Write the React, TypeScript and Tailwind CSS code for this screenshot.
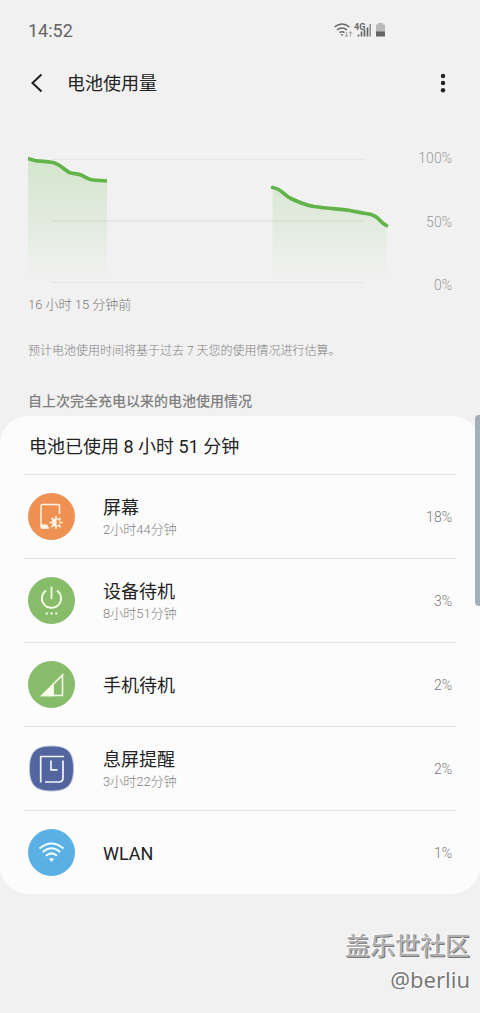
import type { ReactNode } from "react";

type Usage = {
    name: string;
    duration?: string;
    percent: number;
    icon: ReactNode;
};

const ScreenIcon = () => (
    <svg viewBox="0 0 48 48" className="mb-0.5 size-12" fill="none" stroke="#fff6e6" aria-hidden="true">
        <circle cx="24.5" cy="24.5" r="23.5" fill="#ee9152" stroke="none" />
        <path d="M32.5 22V14a1.500 1.500 0 0 0-1.500-1.500H15.500A1.500 1.500 0 0 0 14 14v20.500a1.500 1.500 0 0 0 1.500 1.500H21" strokeWidth="1.5" />
        <path d="M13.500 32.500H20l2.500 4h-7.500q-1.500 0-1.500-1.500z" fill="#fff6e6" stroke="none" />
        <path d="M29 24v13M22.500 30.500h13M24.400 25.900l9.200 9.200M33.600 25.900l-9.200 9.200" strokeWidth="1.6" />
        <circle cx="29" cy="30.500" r="4.200" fill="#fff6e6" stroke="none" />
        <path d="M29.500 27.500a3 3 0 0 1 0 6z" fill="#ee9152" stroke="none" />
    </svg>
);

const PowerIcon = () => (
    <svg viewBox="0 0 48 48" className="mb-0.5 size-12" fill="none" stroke="#f8ffe9" aria-hidden="true">
        <circle cx="24.5" cy="24.5" r="23.5" fill="#87bc6a" stroke="none" />
        <path d="M24.500 10.500v12.500" strokeWidth="1.8" />
        <path d="M19 14.500a9.600 9.600 0 1 0 11 0" strokeWidth="1.8" />
        <path d="M18.700 37.500h2M23.500 37.500h2M28.300 37.500h2" strokeWidth="1.8" />
    </svg>
);

const SignalIcon = () => (
    <svg viewBox="0 0 48 48" className="mb-0.5 size-12" fill="none" stroke="#f8ffe9" aria-hidden="true">
        <circle cx="24.5" cy="24.5" r="23.5" fill="#87bc6a" stroke="none" />
        <path d="M15 35.500L35.500 15v20.500z" strokeWidth="1.6" />
        <path d="M14 36.200L27 23.500v12.700z" fill="#f8ffe9" stroke="none" />
    </svg>
);

const ClockIcon = () => (
    <svg viewBox="0 0 48 48" className="mb-0.5 size-12" fill="none" stroke="#f4f5ff" strokeWidth="1.7" aria-hidden="true">
        <path
            d="M24.500 2C40.500 2 46.500 8 46.500 24.500S40.500 47 24.500 47 2.500 41 2.500 24.500 8.500 2 24.500 2z"
            fill="#52659f"
            stroke="#bcc4de"
            strokeWidth="1"
        />
        <path d="M13.700 38.500V12.500H37" />
        <path d="M36 16.500V34.500a3.500 3.500 0 0 1-3.500 3.500H18" />
        <path d="M24 16.500v9.300h6.500" />
    </svg>
);

const WlanIcon = () => (
    <svg viewBox="0 0 48 48" className="mb-0.5 size-12" fill="none" stroke="#f3ffff" strokeWidth="2" aria-hidden="true">
        <circle cx="24.5" cy="24.5" r="23.5" fill="#5aafe5" stroke="none" />
        <path d="M12.500 20.500q12-10 24 0" />
        <path d="M15.800 24q8.700-7.400 17.400 0" />
        <path d="M19 27.800q5.500-4.800 11 0" />
        <path d="M22 31q2.500-2 5 0L24.500 34z" fill="#f3ffff" stroke="none" />
    </svg>
);

const usages: Usage[] = [
    { name: "屏幕", duration: "2小时44分钟", percent: 18, icon: <ScreenIcon /> },
    { name: "设备待机", duration: "8小时51分钟", percent: 3, icon: <PowerIcon /> },
    { name: "手机待机", percent: 2, icon: <SignalIcon /> },
    { name: "息屏提醒", duration: "3小时22分钟", percent: 2, icon: <ClockIcon /> },
    { name: "WLAN", percent: 1, icon: <WlanIcon /> },
];

const StatusBar = () => (
    <div className="flex h-14 items-center justify-between pt-1.5 pr-[92px] pl-7">
        <span className="text-lg leading-6 text-[#656565]">14:52</span>
        <svg viewBox="0 0 56 18" className="h-[18px] w-14" fill="none" stroke="#666" aria-hidden="true">
            {/* wifi */}
            <path d="M2.500 5q7.500-6 15 0M5 8q5-4 10 0M7.500 10.700q2.500-2 5 0" strokeWidth="1.5" />
            <path d="M8.500 12.200h3L10 14z" fill="#666" stroke="none" />
            <path d="M14.500 10v5M12.800 13l1.700 2 1.700-2M18.500 14.500v-5M16.800 11.500l1.700-2 1.700 2" stroke="#aaa" />
            {/* 4G signal */}
            <text x="22" y="7.500" fontSize="9" fontWeight="700" fill="#666" stroke="none">
                4G
            </text>
            <path d="M26.500 14.500v-2M29.500 14.500v-5M32.500 14.500V8M35.500 14.500V5.500" strokeWidth="1.700" />
            <path d="M38.200 14.500V2" strokeWidth="1.500" stroke="#888" />
            {/* battery */}
            <path d="M44 2.500h2V1h5v1.500h2V10h-9z" fill="#b9b9b9" stroke="none" />
            <path d="M44 9.500h9v5h-9z" fill="#666" stroke="none" />
        </svg>
    </div>
);

const Header = () => (
    <header className="flex h-[54px] items-center justify-between px-6">
        <div className="flex items-center">
            <button type="button" aria-label="返回" className="mr-[19px] flex size-6 items-center justify-center">
                <svg viewBox="0 0 24 24" className="size-6" fill="none" stroke="#222" strokeWidth="2">
                    <path d="M17.500 3.500L8.500 12l9 8.500" />
                </svg>
            </button>
            <h1 className="pt-0.5 text-lg leading-6 text-[#222]">电池使用量</h1>
        </div>
        <button type="button" aria-label="更多选项" className="flex h-6 w-[26px] items-center justify-center">
            <svg viewBox="0 0 6 20" className="h-5 w-[6px]" fill="#222">
                <circle cx="3" cy="3" r="2.200" />
                <circle cx="3" cy="10" r="2.200" />
                <circle cx="3" cy="17.300" r="2.200" />
            </svg>
        </button>
    </header>
);

const firstCurve = "M0 10.500C4 11.500 6 13 12 13.200S22 14 25 14.500C32 16 36 22 42 24.800C46 26 48 25.200 53 27C58 29 60 31.500 65 32C70 32.500 74 32.500 79 33";
const secondCurve = "M244.500 39.500C253 40.500 255 46 262 50C268 53 280 57.500 286 58.500C300 60.500 310 61 322 62.500C330 64 332 64.500 338 65.500C352 67 351 74.500 358.500 77.500";

const BatteryChart = () => (
    <div className="flex h-[146px]">
        <svg viewBox="0 0 364 146" className="h-full min-w-0 flex-1" fill="none" role="img" aria-label="电池使用量">
            <defs>
                <linearGradient id="fade" gradientUnits="userSpaceOnUse" x1="0" y1="10" x2="0" y2="132">
                    <stop offset="0" stopColor="#6fc052" stopOpacity="0.23" />
                    <stop offset="0.500" stopColor="#6fc052" stopOpacity="0.120" />
                    <stop offset="1" stopColor="#6fc052" stopOpacity="0" />
                </linearGradient>
            </defs>
            <path d="M23 11.500H336M23 134.500H336" stroke="#e5e5e5" />
            <path d="M23 73H336" stroke="#e5e5e5" strokeWidth="2" />
            <path d={firstCurve + "V132H0z"} fill="url(#fade)" />
            <path d={secondCurve + "V132H244.500z"} fill="url(#fade)" />
            <path d={firstCurve} stroke="#63b34b" strokeWidth="3.700" />
            <path d={secondCurve} stroke="#63b34b" strokeWidth="3.700" strokeLinecap="round" />
        </svg>
        <div className="-mb-px flex w-[60px] flex-col justify-between text-right text-sm leading-5 font-light text-[#999]">
            <span>100%</span>
            <span>50%</span>
            <span>0%</span>
        </div>
    </div>
);

const UsageRow = ({ name, duration, percent, icon }: Usage) => (
    <li className="flex h-[84px] items-center border-t border-[#e4e4e4] pr-[5px] pl-1">
        {icon}
        <div className="ml-7 flex-1 pt-0.5">
            <p className="text-lg leading-6 text-[#222]">{name}</p>
            {duration && <p className="text-[13px] leading-5 font-light text-[#808080]">{duration}</p>}
        </div>
        <span className="text-sm leading-5 font-light text-[#777]">{percent}%</span>
    </li>
);

const App = () => {
    return (
        <div className="relative min-h-screen w-full overflow-hidden bg-[#f1f1f1] font-[Roboto,'Noto_Sans_CJK_SC',sans-serif]">
            <StatusBar />
            <Header />

            <main>
                <section className="px-7 pt-[38px]">
                    <BatteryChart />
                    <p className="pt-px text-[13px] leading-5 font-light text-[#777]">16 小时 15 分钟前</p>
                    <p className="mt-[26px] text-xs leading-5 font-light text-[#808080]">
                        预计电池使用时间将基于过去 7 天您的使用情况进行估算。
                    </p>
                    <h2 className="mt-[30px] text-sm leading-5 font-medium text-[#808080]">
                        自上次完全充电以来的电池使用情况
                    </h2>
                </section>

                <section className="mt-[5px] rounded-[28px] bg-[#fcfcfc] px-[23px]">
                    <h3 className="px-[6px] pt-[19px] pb-[15px] text-lg leading-6 text-[#222]">
                        电池已使用 8 小时 51 分钟
                    </h3>
                    <ul>
                        {usages.map((usage) => (
                            <UsageRow key={usage.name} {...usage} />
                        ))}
                    </ul>
                </section>
            </main>

            <footer className="flex flex-col items-end px-[10px] pt-[37px]">
                <p className="text-[25px] leading-8 font-medium text-[#b0b0b0] [text-shadow:-1px_-1px_0_#fff,1px_1px_0_#777]">
                    盖乐世社区
                </p>
                <p className="font-['Noto_Sans',sans-serif] text-[22px] leading-8 text-[#777] [text-shadow:-1px_-1px_0_#fff,1px_1px_0_#fff]">
                    @berliu
                </p>
            </footer>

            {/* edge panel handle */}
            <div className="absolute top-[415px] right-0 h-[191px] w-[5px] rounded-l bg-[#a3b1b7]" />
        </div>
    );
};

export default App;
